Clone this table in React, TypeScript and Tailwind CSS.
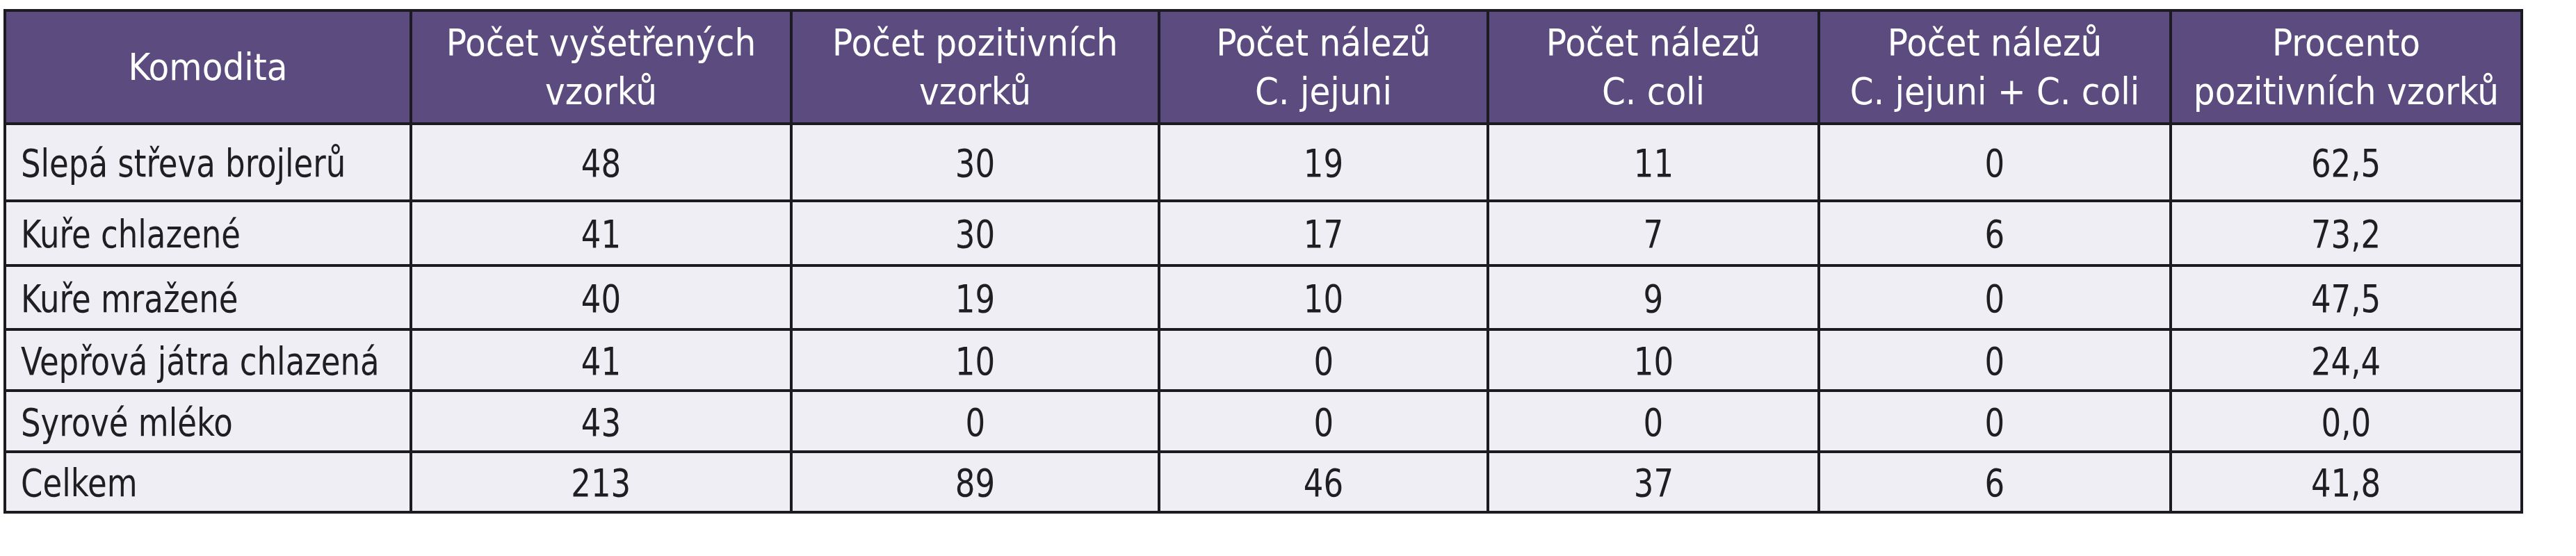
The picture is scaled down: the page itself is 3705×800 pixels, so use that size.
import React from "react"

const font = "font-['Liberation_Sans_Narrow','DejaVu_Sans_Condensed','Liberation_Sans',sans-serif]"

const widths = [
  "w-[584px]",
  "w-[547px]",
  "w-[529px]",
  "w-[473px]",
  "w-[476px]",
  "w-[506px]",
  "w-[505px]",
]

const headers: string[][] = [
  ["Komodita"],
  ["Počet vyšetřených", "vzorků"],
  ["Počet pozitivních", "vzorků"],
  ["Počet nálezů", "C. jejuni"],
  ["Počet nálezů", "C. coli"],
  ["Počet nálezů", "C. jejuni + C. coli"],
  ["Procento", "pozitivních vzorků"],
]

const rows: { name: string; values: string[]; h: string }[] = [
  { name: "Slepá střeva brojlerů", values: ["48", "30", "19", "11", "0", "62,5"], h: "h-[111px]" },
  { name: "Kuře chlazené", values: ["41", "30", "17", "7", "6", "73,2"], h: "h-[93px]" },
  { name: "Kuře mražené", values: ["40", "19", "10", "9", "0", "47,5"], h: "h-[92px]" },
  { name: "Vepřová játra chlazená", values: ["41", "10", "0", "10", "0", "24,4"], h: "h-[88px]" },
  { name: "Syrové mléko", values: ["43", "0", "0", "0", "0", "0,0"], h: "h-[88px]" },
  { name: "Celkem", values: ["213", "89", "46", "37", "6", "41,8"], h: "h-[87px]" },
]

export default function App() {
  return (
    <div className={`w-[3705px] h-[800px] bg-white pl-[5px] pt-[13px] ${font}`}>
      <table className="table-fixed border-collapse border-4 border-[#1c1b21] w-[3624px]">
        <colgroup>
          {widths.map((w, i) => (
            <col key={i} className={w} />
          ))}
        </colgroup>
        <thead>
          <tr className="h-[163px] bg-[#5b4b7f]">
            {headers.map((lines, i) => (
              <th
                key={i}
                className="border-4 border-[#1c1b21] px-2 text-center align-middle text-[54px] leading-[70px] font-normal text-white"
              >
                {lines.map((l, j) => (
                  <div key={j}>{l}</div>
                ))}
              </th>
            ))}
          </tr>
        </thead>
        <tbody>
          {rows.map((r) => (
            <tr key={r.name} className={`${r.h} bg-[#efeef5]`}>
              <td className="border-4 border-[#1c1b21] pl-[21px] text-left align-middle text-[55px] leading-none text-[#1f1f22] whitespace-nowrap">
                <span className="inline-block origin-left scale-x-[0.91] pt-[4px]">{r.name}</span>
              </td>
              {r.values.map((v, j) => (
                <td
                  key={j}
                  className="border-4 border-[#1c1b21] text-center align-middle text-[55px] leading-none text-[#1f1f22]"
                >
                  <span className="inline-block scale-x-[0.91] pt-[4px]">{v}</span>
                </td>
              ))}
            </tr>
          ))}
        </tbody>
      </table>
    </div>
  )
}
